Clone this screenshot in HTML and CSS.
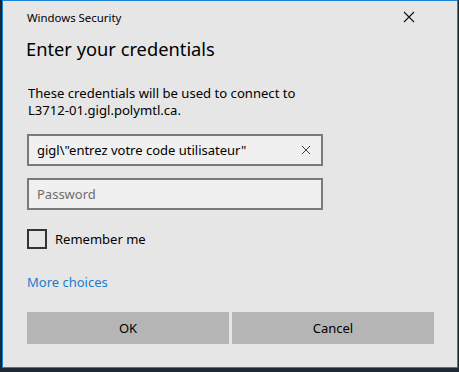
FILE: index.html
```html
<!DOCTYPE html>
<html lang="en">

<head>
  <link rel="stylesheet" href="styles.css">
</head>

<body>
  <div class="window">
    <div class="titlebar">
      <span class="app-name">Windows Security</span>
      <span class="close-btn">
        <svg width="12" height="12" viewBox="0 0 12 12">
          <path d="M1 1 L11 11 M11 1 L1 11" stroke="#111" stroke-width="1.1" fill="none" />
        </svg>
      </span>
    </div>

    <h1 class="heading">Enter your credentials</h1>

    <p class="info">These credentials will be used to connect to<br>L3712-01.gigl.polymtl.ca.</p>

    <div class="field user-field">
      <span class="field-text">gigl\"entrez votre code utilisateur"</span>
      <span class="clear-btn">
        <svg width="10" height="10" viewBox="0 0 10 10">
          <path d="M1 1 L9 9 M9 1 L1 9" stroke="#444" stroke-width="1" fill="none" />
        </svg>
      </span>
    </div>

    <div class="field pass-field">
      <span class="placeholder">Password</span>
    </div>

    <div class="remember">
      <span class="checkbox"></span>
      <span>Remember me</span>
    </div>

    <a class="more-link" href="#">More choices</a>

    <div class="buttons">
      <div class="btn">OK</div>
      <div class="btn">Cancel</div>
    </div>
  </div>
</body>

</html>
```

FILE: styles.css
```css
body {
  margin: 0;
  width: 459px;
  height: 372px;
  background-color: #1d2833;
  font-family: 'Noto Sans', 'Open Sans', sans-serif;
  color: #000;
  overflow: hidden;
}

.window {
  box-sizing: border-box;
  width: 456px;
  height: 368px;
  margin-left: 2px;
  border: 1px solid #1883d7;
  background-color: #e6e6e6;
  padding: 0 23px 0 24px;
}

.titlebar {
  display: flex;
  justify-content: space-between;
  align-items: center;
  height: 32px;
  font-size: 11.4px;
}

.close-btn {
  display: flex;
  margin-right: 19px;
}

.heading {
  margin: 2px 0 0 -1px;
  font-size: 18.3px;
  font-weight: normal;
  line-height: 28px;
}

.info {
  margin: 22px 0 0 1px;
  font-size: 13.1px;
  line-height: 17px;
}

.field {
  box-sizing: border-box;
  display: flex;
  align-items: center;
  justify-content: space-between;
  width: 296px;
  height: 32px;
  padding: 0 10px 0 8px;
  border: 2px solid #7a7a7a;
  background-color: #f0f0f0;
  font-size: 13px;
}

.user-field {
  margin-top: 15px;
}

.pass-field {
  margin-top: 12px;
}

.field-text {
  white-space: nowrap;
}

.clear-btn {
  display: flex;
}

.placeholder {
  color: #6d6d6d;
}

.remember {
  display: flex;
  align-items: center;
  gap: 8px;
  margin-top: 19px;
  font-size: 13px;
}

.checkbox {
  box-sizing: border-box;
  width: 20px;
  height: 20px;
  border: 2px solid #333;
}

.more-link {
  display: block;
  margin-top: 24px;
  font-size: 13px;
  color: #1a7bd0;
  text-decoration: none;
}

.buttons {
  display: flex;
  gap: 3px;
  margin-top: 21px;
}

.btn {
  flex: 1;
  height: 32px;
  display: flex;
  align-items: center;
  justify-content: center;
  background-color: #b5b5b5;
  font-size: 13px;
}
```
